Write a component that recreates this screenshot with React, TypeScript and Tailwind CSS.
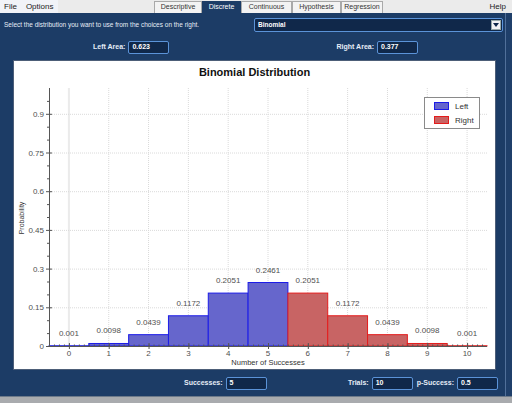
import React from "react";

const N = 10;
const P = 0.5;
const SPLIT = 5; // k <= SPLIT is "Left"

function choose(n: number, k: number) {
  let r = 1;
  for (let i = 1; i <= k; i++) r = (r * (n - k + i)) / i;
  return r;
}

const probs = Array.from({ length: N + 1 }, (_, k) => choose(N, k) * Math.pow(P, k) * Math.pow(1 - P, N - k));

// chart mapping (page coordinates)
const X0 = 49;
const X1 = 487;
const Y0 = 346;
const YTOP = 88;
const px = (x: number) => X0 + ((x + 0.5) * (X1 - X0)) / 11;
const py = (v: number) => Y0 - v * (Y0 - YTOP);

function Field({ label, value }: { label: string; value: string }) {
  return (
    <div className="flex items-center gap-[3px]">
      <span className="text-[7px] font-bold text-[#e6edf7]">{label}</span>
      <div className="flex h-[13px] w-[41px] items-center rounded-[2px] border border-[#5b93d8] bg-[#10284a] px-[3px] text-[7px] font-bold text-white">
        {value}
      </div>
    </div>
  );
}

function Chart() {
  const yTicks = [0, 0.15, 0.3, 0.45, 0.6, 0.75, 0.9];
  const yMinor = Array.from({ length: 20 }, (_, i) => i * 0.05);
  const xMinor = Array.from({ length: 88 }, (_, i) => -0.5 + i * 0.125);
  return (
    <svg width={481} height={286} viewBox="14 83 481 286" className="block">
      {/* grid */}
      {Array.from({ length: 11 }, (_, k) => (
        <line
          key={"gx" + k}
          x1={px(k)}
          x2={px(k)}
          y1={YTOP}
          y2={Y0}
          stroke={k === 0 ? "#ebebeb" : "#dadada"}
          strokeWidth={k === 0 ? 2 : 1}
          strokeDasharray={k === 0 ? undefined : "1 1"}
        />
      ))}
      {yTicks.slice(1).map((v) => (
        <line key={"gy" + v} x1={X0 + 1} x2={X1} y1={py(v) + 0.5} y2={py(v) + 0.5} stroke="#dadada" strokeDasharray="1 1" />
      ))}

      {/* bars */}
      {probs.map((p, k) => {
        const left = k <= SPLIT;
        return (
          <rect
            key={"b" + k}
            x={px(k - 0.5)}
            y={py(p)}
            width={px(k + 0.5) - px(k - 0.5)}
            height={Y0 - py(p)}
            fill={left ? "#6666cc" : "#c86464"}
            stroke={left ? "#1c1ce8" : "#e41c1c"}
            strokeWidth={1}
          />
        );
      })}
      {probs.map((p, k) => (
        <text key={"l" + k} x={px(k)} y={py(p) - 10} fontSize={8} fill="#505050" textAnchor="middle">
          {Number(p.toFixed(4)).toString()}
        </text>
      ))}

      {/* axes */}
      <line x1={X0 + 0.5} x2={X0 + 0.5} y1={YTOP} y2={Y0 + 1} stroke="#555" />
      <line x1={X0} x2={X1} y1={Y0 + 0.5} y2={Y0 + 0.5} stroke="#555" />
      {yMinor.map((v, i) => (
        <line key={"ym" + i} x1={i % 3 === 0 ? 46 : 47} x2={i % 3 === 0 ? 52 : 50} y1={py(v) + 0.5} y2={py(v) + 0.5} stroke="#555" />
      ))}
      {yTicks.map((v) => (
        <text key={"yt" + v} x={44} y={py(v) + 3} fontSize={8} fill="#505050" textAnchor="end">
          {v}
        </text>
      ))}
      {xMinor.map((x, i) => (
        <line key={"xm" + i} x1={px(x) + 0.5} x2={px(x) + 0.5} y1={Y0 - 1.5} y2={Y0} stroke="#555" />
      ))}
      {Array.from({ length: 11 }, (_, k) => (
        <g key={"xt" + k}>
          <line x1={px(k) + 0.5} x2={px(k) + 0.5} y1={Y0 - 3} y2={Y0 + 3} stroke="#555" />
          <text x={px(k)} y={356} fontSize={8} fill="#505050" textAnchor="middle">
            {k}
          </text>
        </g>
      ))}
      <text x={268} y={365} fontSize={7.5} fill="#333" textAnchor="middle">
        Number of Successes
      </text>
      <text x={22} y={218} fontSize={7} fill="#333" textAnchor="middle" dominantBaseline="middle" transform="rotate(-90 22 218)">
        Probability
      </text>

      {/* legend */}
      <rect x={424.5} y={97.5} width={55} height={31} fill="#fff" stroke="#8a8a8a" />
      <rect x={434.5} y={102.5} width={14} height={7} fill="#6666cc" stroke="#1c1ce8" />
      <rect x={434.5} y={116.5} width={14} height={7} fill="#c86464" stroke="#e41c1c" />
      <text x={455} y={109} fontSize={8} fill="#333">
        Left
      </text>
      <text x={455} y={123} fontSize={8} fill="#333">
        Right
      </text>
    </svg>
  );
}

export default function App() {
  const tabs = [
    { name: "Descriptive", w: "w-[48px]" },
    { name: "Discrete", w: "w-[39px]", active: true },
    { name: "Continuous", w: "w-[51px]" },
    { name: "Hypothesis", w: "w-[49px]" },
    { name: "Regression", w: "w-[42px]" },
  ];

  return (
    <div className="flex h-[403px] w-[512px] flex-col overflow-hidden bg-[#1c3c66] font-['Liberation_Sans',Arial,sans-serif]">
      {/* Menu bar + tabs */}
      <div className="flex h-[13px] shrink-0 items-end bg-[#ebebeb]">
        <div className="flex h-full w-[58px] items-center gap-[9px] bg-[#f1f3f8] pl-[4px] text-[8px] text-[#222]">
          <span>File</span>
          <span>Options</span>
        </div>
        <div className="ml-[96px] flex h-[12px] items-stretch">
          {tabs.map((t) =>
            t.active ? (
              <div key={t.name} className={`${t.w} flex items-center justify-center bg-[#1c3c66] text-[7px] text-white`}>
                {t.name}
              </div>
            ) : (
              <div
                key={t.name}
                className={`${t.w} flex items-center justify-center border border-b-0 border-[#a9a9a9] bg-[#f3f3f3] text-[7px] text-[#333]`}
              >
                {t.name}
              </div>
            )
          )}
        </div>
        <div className="ml-auto flex h-full items-center pr-[6px] text-[8px] text-[#222]">Help</div>
      </div>

      <div className="flex flex-1">
        {/* main blue panel */}
        <div className="flex w-[505px] flex-col">
          <div className="mt-[4px] flex h-[15px] items-center justify-between pl-[4px] pr-[2px]">
            <span className="text-[6.5px] text-[#e6edf7]">Select the distribution you want to use from the choices on the right.</span>
            <div className="flex h-[14px] w-[249px] items-center justify-between rounded-[2px] border border-[#5b93d8] bg-[#10284a] pl-[3px] pr-[1px]">
              <span className="text-[6.5px] font-bold text-white">Binomial</span>
              <div className="flex h-[10px] w-[10px] items-center justify-center border border-[#9aa] bg-[#f4f4f4]">
                <svg width="6" height="4" viewBox="0 0 6 4">
                  <path d="M0 0 L6 0 L3 4 Z" fill="#10284a" />
                </svg>
              </div>
            </div>
          </div>

          <div className="mt-[8px] flex h-[14px] items-center justify-between pl-[93px] pr-[87px]">
            <Field label="Left Area:" value="0.623" />
            <Field label="Right Area:" value="0.377" />
          </div>

          <div className="ml-[13px] mt-[6px] h-[310px] w-[483px] border border-[#4d5e78] bg-white">
            <div className="flex h-[22px] items-center justify-center text-[11px] font-bold text-[#111]">Binomial Distribution</div>
            <Chart />
          </div>

          <div className="mt-[6px] flex h-[14px] items-center pl-[184px] pr-[7px]">
            <Field label="Successes:" value="5" />
            <div className="ml-auto flex items-center gap-[4px]">
              <Field label="Trials:" value="10" />
              <Field label="p-Success:" value="0.5" />
            </div>
          </div>
        </div>
        <div className="w-[7px] border-l border-[#51709a] bg-[#1f3f6a]" />
      </div>

      <div className="h-[7px] shrink-0 border-t border-[#6d7a8a] bg-[#a9abae]" />
    </div>
  );
}
